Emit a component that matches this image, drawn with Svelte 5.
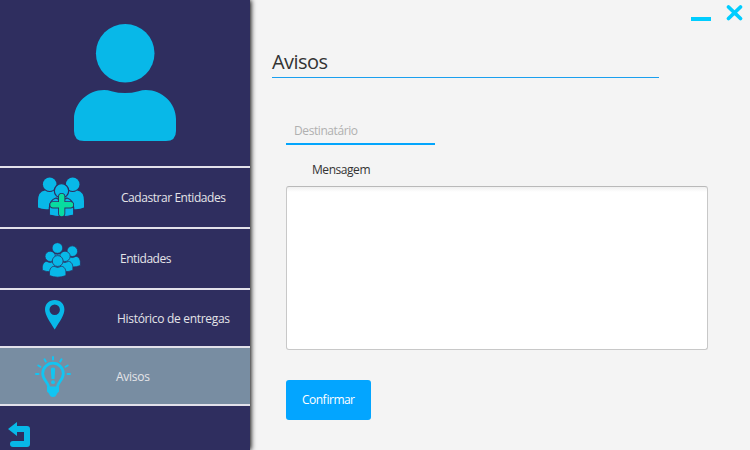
<script>
  const items = [
    { id: 'add', label: 'Cadastrar Entidades', h: 61, x: 121, w: 105 },
    { id: 'group', label: 'Entidades', h: 61, x: 120, w: 51.5 },
    { id: 'pin', label: 'Histórico de entregas', h: 58, x: 117, w: 113 },
    { id: 'bulb', label: 'Avisos', h: 58, x: 116, w: 34 }
  ];
  const rays = [0, 30, 60, 90, 120, 150, 180];
</script>

{#snippet person(x, y, s)}
  <g transform="translate({x} {y}) scale({s})">
    <circle cx="0" cy="-8" r="8.200" />
    <path d="M-12.500 14V10C-12.500 4-9.500 0-5.500 0Q0 3.500 5.500 0C9.500 0 12.500 4 12.500 10V14Q0 19-12.500 14Z" />
  </g>
{/snippet}

<main>
  <aside>
    <div class="avatar">
      <svg width="102" height="118" viewBox="0 0 102 118">
        <circle cx="51.2" cy="29.3" r="29.3" />
        <path d="M30 66Q34 66 37.500 67.200Q51 71 64.500 67.200Q68 66 72 66C88 66 102 79 102 95V107Q102 117 92 117H10Q0 117 0 107V95C0 79 14 66 30 66Z" />
      </svg>
    </div>
    <nav>
      {#each items as item}
        <div class="item" class:active={item.id === 'bulb'} style:height="{item.h}px">
          <div class="icon" style:width="{item.x}px">
            {#if item.id === 'add'}
              <svg class="add" width="48" height="42" viewBox="0 0 48 42">
                <circle cx="12.700" cy="7.300" r="6.800" /><circle cx="35.700" cy="7.300" r="6.800" />
                <path d="M1 30.500V24Q1 14.500 8 13.500Q12.700 16.500 17 13.500L24 18L31 13.500Q36 16.500 40 13.500Q47 14.500 47 24V30.500Q42 33 35 32H13Q6 33 1 30.500Z" />
                <g class="cut"><circle cx="24.500" cy="13.800" r="7.200" /><path d="M12.300 38V31Q12.500 23 19 21Q24.500 24.500 30 21Q36.500 23 36.700 31V38Q24.500 41.500 12.300 38Z" /></g>
                <path class="plus-edge" d="M24.700 19.500V36.500M16 27.800H33.500" />
                <path class="plus" d="M24.700 19.500V36.500M16 27.800H33.500" />
              </svg>
            {:else if item.id === 'group'}
              <svg class="group" width="40" height="37" viewBox="0 0 40 37">
                <g class="cut">
                  {@render person(30.3, 13.4, 0.65)}
                  {@render person(15.4, 10.2, 0.65)}
                  {@render person(8.2, 18.4, 0.63)}
                  {@render person(23, 18.4, 0.63)}
                  {@render person(15.7, 23.3, 0.66)}
                </g>
              </svg>
            {:else if item.id === 'pin'}
              <svg class="pin" width="20" height="30" viewBox="0 0 20 30">
                <path fill-rule="evenodd" d="M9.700 0C4 0 0 4 0 9.500C0 15 4.500 21 9.700 29.500C15 21 19.400 15 19.400 9.500C19.400 4 15.500 0 9.700 0ZM9.700 4.600A5.200 5.200 0 1 1 9.700 15A5.200 5.200 0 1 1 9.700 4.600Z" />
              </svg>
            {:else}
              <svg class="bulb" width="36" height="42" viewBox="0 0 36 42">
                <path class="glass" d="M14 32C13.500 26 7.700 24 7.700 17.500A10.300 10.300 0 0 1 28.300 17.500C28.300 24 22.500 26 22 32Z" />
                <path d="M12 31H24V35.500L22 37.500Q21 41 18 41Q15 41 14 37.500L12 35.500Z" />
                <path d="M15.800 13Q15.800 11.500 18 11.500Q20.200 11.500 20.200 13L19.500 23H16.500Z" /><circle cx="18" cy="26.200" r="1.900" />
                {#each rays as a}
                  <path class="ray" transform="rotate({a - 90} 18 18)" d="M18 3.500V1" />
                {/each}
              </svg>
            {/if}
          </div>
          <svg class="label" width={item.w} height="18"><text x="0" y={item.id === 'pin' || item.id === 'bulb' ? 14 : 13} textLength={item.w}>{item.label}</text></svg>
        </div>
      {/each}
    </nav>
    <svg class="back" width="23" height="26" viewBox="0 0 23 26">
      <path d="M0 7L9 0V4H19Q22 4 22 7V22Q22 25 19 25H5Q2 25 2 22Q2 19 5 19H16V10H9V14Z" />
    </svg>
  </aside>

  <section>
    <div class="controls">
      <svg width="54" height="18" viewBox="0 0 54 18">
        <path d="M0 14H20" stroke-width="4" />
        <path d="M37.500 2L49.500 13.500M49.500 2L37.500 13.500" stroke-width="3.800" stroke-linecap="round" />
      </svg>
    </div>
    <h1><svg width="60" height="30"><text x="0" y="23" textLength="56">Avisos</text></svg></h1>
    <div class="field"><svg width="66" height="18"><text x="0" y="13" textLength="64">Destinatário</text></svg></div>
    <div class="caption"><svg width="60" height="18"><text x="0" y="13" textLength="58.5">Mensagem</text></svg></div>
    <div class="area"></div>
    <button><svg width="53" height="18"><text x="0" y="13" textLength="53">Confirmar</text></svg></button>
  </section>
</main>

<style>
  main { width: 750px; height: 450px; display: flex; overflow: hidden; background: #f4f4f4; font-family: "Open Sans", "Noto Sans", sans-serif; font-size: 12px; }
  svg { display: block; overflow: visible; flex: none; }
  aside { width: 250px; height: 450px; flex: none; background: #2f2e5f; box-shadow: 1px 0 5px #000; fill: #08b8e8; display: flex; flex-direction: column; }
  .avatar { height: 168px; box-sizing: border-box; padding: 24px 0 0 74px; border-bottom: 2px solid #e2e1ea; flex: none; }
  .item { box-sizing: border-box; border-bottom: 2px solid #e2e1ea; display: flex; align-items: center; }
  .active { background: #788da2; }
  .icon { height: 100%; flex: none; }
  .label { fill: #e4e4e8; }
  .add { margin: 9px 0 0 37px; }
  .group { margin: 14px 0 0 42px; }
  .pin { margin: 10px 0 0 45px; }
  .bulb { margin: 8px 0 0 35px; fill: #12c5f2; }
  .cut { stroke: #2f2e5f; stroke-width: 1.2; }
  .plus-edge { stroke: #2f2e5f; stroke-width: 7.2; stroke-linecap: round; }
  .plus { stroke: #08dca0; stroke-width: 5.4; stroke-linecap: round; }
  .glass { fill: none; stroke: #12c5f2; stroke-width: 2.8; }
  .ray { stroke: #12c5f2; stroke-width: 2; stroke-linecap: round; }
  .back { margin: 16px 0 0 8px; }
  section { width: 500px; box-sizing: border-box; padding-left: 22px; }
  .controls { height: 46px; box-sizing: border-box; padding: 5px 0 0 419px; stroke: #00cdff; fill: none; }
  h1 { margin: 0; width: 387px; height: 32px; box-sizing: border-box; border-bottom: 1px solid #1a9fee; font-size: 20px; font-weight: 400; fill: #333; }
  .field { margin: 44px 0 0 14px; width: 149px; height: 23px; box-sizing: border-box; padding-left: 8px; border-bottom: 2px solid #03a5fc; fill: #b0b0b0; }
  .caption { margin: 16px 0 0 40px; height: 25px; fill: #333; }
  .area { margin-left: 14px; width: 422px; height: 164px; box-sizing: border-box; border: 1px solid #c8c8c8; border-top-color: #b9b9b9; border-radius: 3px; background: linear-gradient(#f0f0f0, #fff 5px); }
  button { margin: 30px 0 0 14px; width: 85px; height: 40px; border: 0; border-radius: 3px; background: #03a5ff; fill: #fff; padding: 0; display: flex; align-items: center; justify-content: center; font: inherit; }
</style>
